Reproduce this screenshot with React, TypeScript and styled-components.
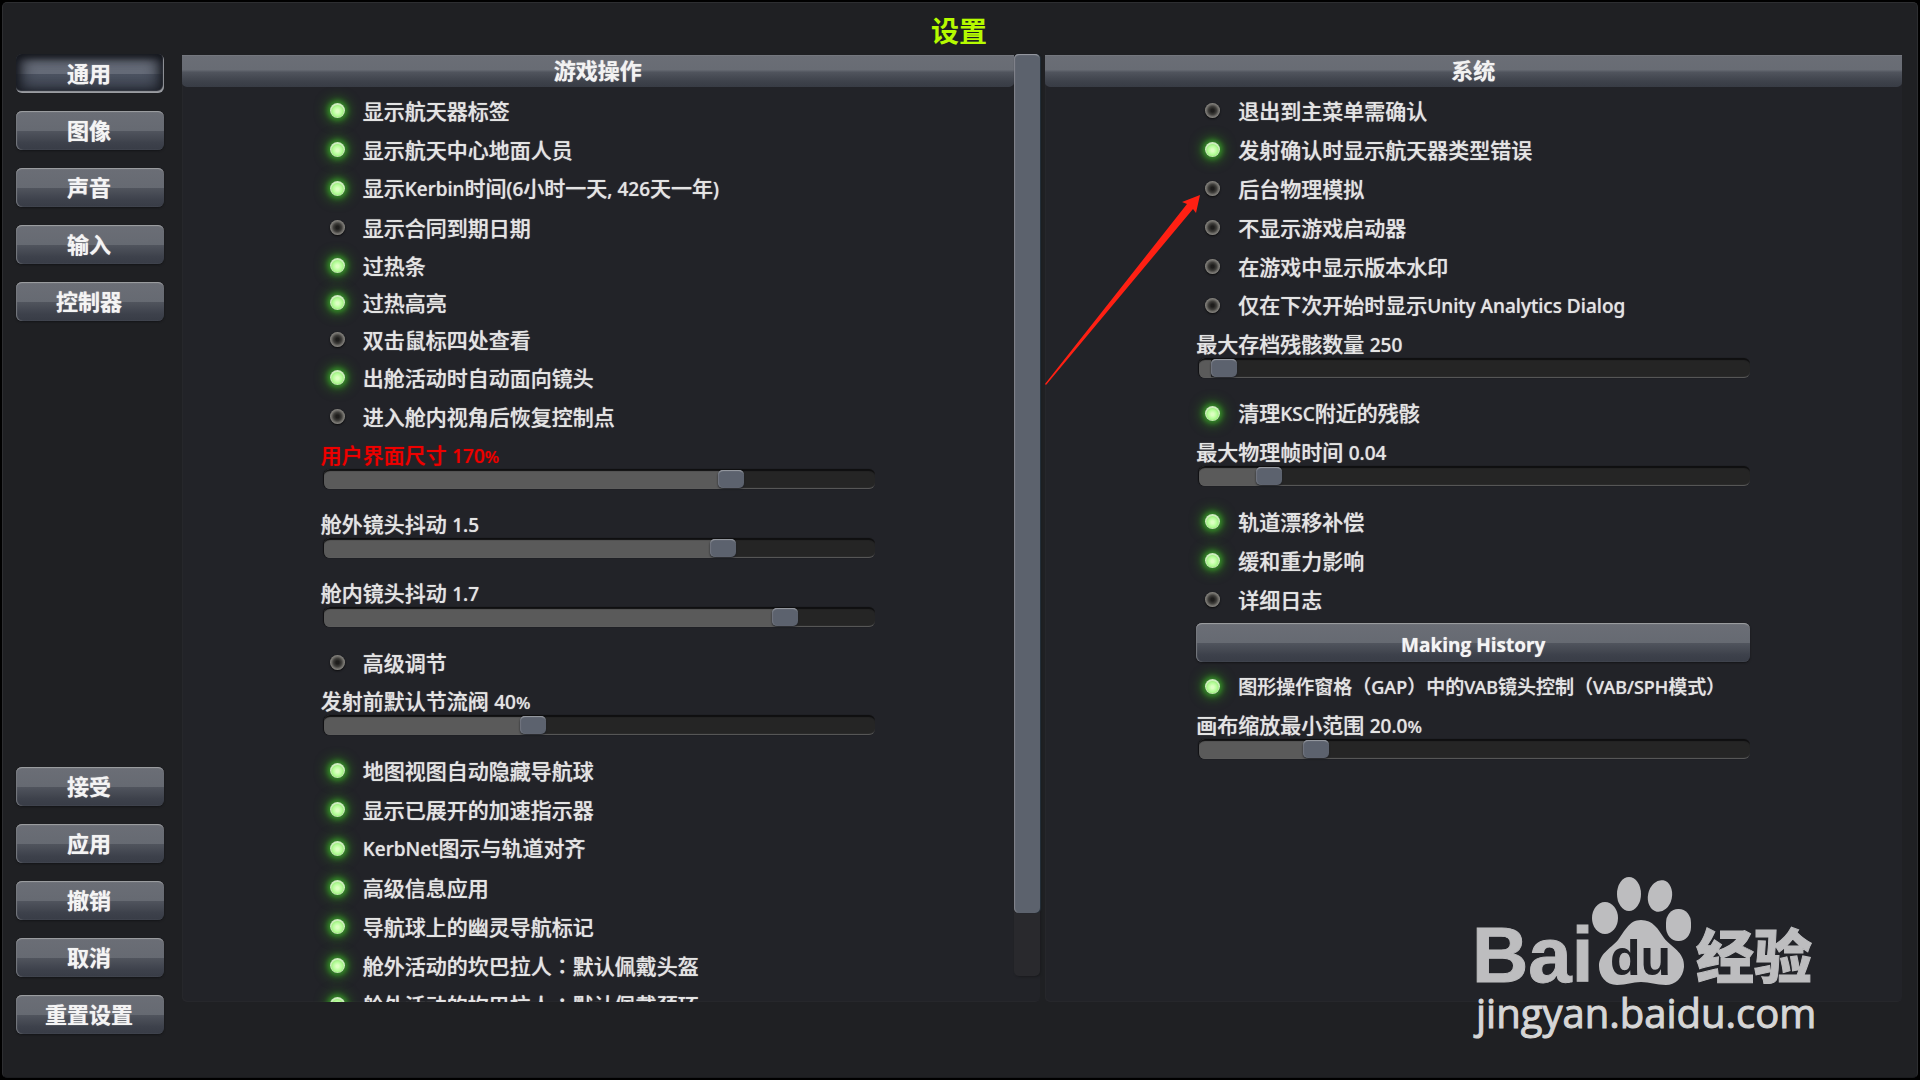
import React, { useState } from "react";
import styled, { createGlobalStyle, css } from "styled-components";

const GlobalStyle = createGlobalStyle`
  *, *::before, *::after { box-sizing: border-box; }
  body {
    margin: 0;
    background: #000;
    color: #e4e4e4;
    font-family: "Noto Sans", "Noto Sans CJK SC", sans-serif;
    font-size: 21px;
    line-height: 26px;
  }
  button, input { font: inherit; color: inherit; }
`;

const Screen = styled.div`
  position: relative;
  height: 100vh;
  padding: 2px;
  display: flex;
  overflow: hidden;
`;

const Frame = styled.div`
  flex: 1;
  min-width: 0;
  display: flex;
  flex-direction: column;
  padding: 0 15px 43px 13px;
  border: 1px solid #2d2e31;
  border-bottom-color: #1a1b1e;
  border-radius: 5px;
  background: #1f2023;
`;

const Title = styled.h1`
  margin: 0;
  height: 51px;
  padding-top: 8px;
  font-size: 28px;
  line-height: 40px;
  font-weight: 700;
  text-align: center;
  color: #b6fb00;
`;

const Body = styled.main`
  flex: 1;
  min-height: 0;
  display: grid;
  grid-template-columns: 148px minmax(0, 1fr);
  gap: 18px;
`;

const Sidebar = styled.nav`
  display: flex;
  flex-direction: column;
  justify-content: space-between;
`;

const ButtonGroup = styled.div`
  display: flex;
  flex-direction: column;
  gap: 18px;
`;

const raised = css`
  background: linear-gradient(#6b6e76, #666a72 50%, #50545d 52%, #3d414b 82%, #383c46);
  box-shadow: inset 0 2px 1px -1px #a0a1a4, inset 1px 0 1px #777a80, 0 1px 2px #141518;
`;

const sunken = css`
  background: linear-gradient(#666b77, #646a77 50%, #4b5260 52%, #404653);
  box-shadow: inset -1px -2px 1px #9a9ca1, inset 0 3px 7px #14161c, inset 6px 0 14px #1d2028,
    inset -6px 0 14px #1d2028;
`;

const PushButton = styled.button<{ $pressed?: boolean }>`
  width: 100%;
  height: 39px;
  padding: 0 2px 2px 0;
  border: 0;
  border-radius: 6px;
  font-size: 22px;
  font-weight: 700;
  color: #f4f4f4;
  text-shadow: 0 0 1px #d0d0d0;
  cursor: pointer;
  ${(p) => (p.$pressed ? sunken : raised)}
`;

const Panels = styled.div`
  min-height: 0;
  margin: 1px 0 32px;
  display: grid;
  grid-template-columns: minmax(0, 1fr) minmax(0, 1fr);
  grid-template-rows: minmax(0, 1fr);
  gap: 5px;
`;

const Panel = styled.section`
  min-height: 0;
  display: flex;
  border-radius: 5px;
  background: #222328;
  box-shadow: inset 1px -1px 0 #26272b;
`;

const PanelMain = styled.div`
  flex: 1;
  min-width: 0;
  min-height: 0;
  display: flex;
  flex-direction: column;
`;

const PanelTitle = styled.h2`
  flex: none;
  margin: 0;
  height: 32px;
  border-radius: 0 0 5px 5px;
  background: linear-gradient(#6b6e76, #686c74 46%, #50545d 54%, #3d414a 84%, #383c45);
  box-shadow: inset 0 1px 0 #74777e;
  font-size: 22px;
  line-height: 31px;
  font-weight: 700;
  text-align: center;
  color: #f2f2f2;
  text-shadow: 0 0 1px #d0d0d0;
`;

const OptionArea = styled.div`
  flex: 1;
  min-height: 0;
  overflow: hidden;
  padding-top: 4px;
`;

const OptionList = styled.div`
  width: 100%;
  max-width: 554px;
  margin: 0 auto;
`;

const ToggleRow = styled.label<{ $compact?: boolean; $small?: boolean }>`
  height: ${(p) => (p.$compact ? 37 : 39)}px;
  padding-left: 9px;
  display: flex;
  align-items: center;
  gap: 18px;
  white-space: nowrap;
  font-size: ${(p) => (p.$small ? 19 : 21)}px;
  font-weight: 500;
  text-shadow: 0 0 1px #b8b8b8;
`;

const Lamp = styled.input`
  appearance: none;
  flex: none;
  width: 15px;
  height: 15px;
  margin: 0;
  border-radius: 50%;
  background: radial-gradient(circle closest-side, #1e1d1c 20%, #3f3e3b 55%, #6d6b67 80%, #8b8983 100%);
  box-shadow: 0 1px 2px #0c0c0d;
  cursor: pointer;

  &:checked {
    background: radial-gradient(circle closest-side at 50% 55%, #dcffc2 20%, #b4fd98 65%, #a6f088 85%, #cdf0bd 100%);
    box-shadow: 0 0 5px 2px #37902a, 0 0 12px 4px #2a6a1e;
  }
`;

const SliderBlock = styled.div`
  height: 69px;
  padding-top: 6px;
`;

const SliderLabel = styled.label<{ $alert?: boolean }>`
  display: block;
  height: 27px;
  white-space: nowrap;
  font-weight: 500;
  color: ${(p) => (p.$alert ? "#ee0000" : "inherit")};
  text-shadow: 0 0 1px ${(p) => (p.$alert ? "#c00000" : "#b8b8b8")};
`;

const Latin = styled.span<{ $small?: boolean }>`
  font-size: ${(p) => (p.$small ? 18 : 19)}px;
`;

const WideColon = styled.span`
  font-family: "Noto Sans CJK TC", sans-serif;
`;

const Percent = styled.span`
  font-size: 17px;
`;

const Range = styled.input`
  appearance: none;
  display: block;
  width: calc(100% - 3px);
  height: 20px;
  margin: 0 0 0 3px;
  border-radius: 6px;
  background: linear-gradient(
    90deg,
    #5a5a5a var(--fill),
    #252525 var(--fill)
  );
  box-shadow: inset 0 3px 1px -1px #0f0f10, inset 0 -2px 1px -1px #5c5c5c, -1px 0 1px #101012;
  cursor: pointer;

  &::-webkit-slider-thumb {
    appearance: none;
    width: 26px;
    height: 18px;
    border-radius: 5px;
    background: #5c626e;
    box-shadow: inset 0 2px 1px -1px #9a9da4, inset 1px 0 1px #70757f, 0 1px 2px #1d1f24;
  }
`;

const Scrollbar = styled.div`
  flex: none;
  width: 26px;
  margin: -1px 0 26px;
  border-radius: 5px;
  background: #29292d;
  box-shadow: 1px 1px 2px #1a1b1e;
`;

const ScrollThumb = styled.div`
  border-radius: 5px;
  background: #5c626d;
  box-shadow: inset 0 2px 1px -1px #9a9da4, inset 2px 0 1px -1px #83868d, 1px 0 1px #24303a;
`;

const WideButton = styled(PushButton)`
  display: block;
  margin: 4px 0 5px;
  padding: 4px 0 0;
  font-family: "Open Sans", "Noto Sans", sans-serif;
  font-size: 19px;
`;

const ArrowMark = styled.svg`
  position: absolute;
  left: 1044px;
  top: 194px;
  width: 158px;
  height: 192px;
  pointer-events: none;
`;

const Watermark = styled.svg`
  position: absolute;
  right: 96px;
  bottom: 32px;
  width: 352px;
  height: 176px;
  pointer-events: none;
  font-family: "Liberation Sans", "Noto Sans CJK SC", sans-serif;
`;

type ToggleItem = { kind: "toggle"; text: string; on: boolean; compact?: boolean; small?: boolean };
type SliderItem = { kind: "slider"; text: string; value: string; percent?: boolean; at: number; alert?: boolean };
type ButtonItem = { kind: "button"; text: string };
type Item = ToggleItem | SliderItem | ButtonItem;

const toggle = (text: string, on: boolean, extra: Partial<ToggleItem> = {}): Item => ({
  kind: "toggle", text, on, ...extra,
});
const slider = (text: string, value: string, at: number, extra: Partial<SliderItem> = {}): Item => ({
  kind: "slider", text, value, at, ...extra,
});

const GAMEPLAY: Item[] = [
  toggle("显示航天器标签", true),
  toggle("显示航天中心地面人员", true),
  toggle("显示Kerbin时间(6小时一天, 426天一年)", true),
  toggle("显示合同到期日期", false),
  toggle("过热条", true, { compact: true }),
  toggle("过热高亮", true, { compact: true }),
  toggle("双击鼠标四处查看", false, { compact: true }),
  toggle("出舱活动时自动面向镜头", true),
  toggle("进入舱内视角后恢复控制点", false),
  slider("用户界面尺寸", "170", 75.1, { percent: true, alert: true }),
  slider("舱外镜头抖动", "1.5", 73.6),
  slider("舱内镜头抖动", "1.7", 85.3),
  toggle("高级调节", false),
  slider("发射前默认节流阀", "40", 37.3, { percent: true }),
  toggle("地图视图自动隐藏导航球", true),
  toggle("显示已展开的加速指示器", true),
  toggle("KerbNet图示与轨道对齐", true),
  toggle("高级信息应用", true),
  toggle("导航球上的幽灵导航标记", true),
  toggle("舱外活动的坎巴拉人：默认佩戴头盔", true),
  toggle("舱外活动的坎巴拉人：默认佩戴颈环", true),
];

const SYSTEM: Item[] = [
  toggle("退出到主菜单需确认", false),
  toggle("发射确认时显示航天器类型错误", true),
  toggle("后台物理模拟", false),
  toggle("不显示游戏启动器", false),
  toggle("在游戏中显示版本水印", false),
  toggle("仅在下次开始时显示Unity Analytics Dialog", false),
  slider("最大存档残骸数量", "250", 2.2),
  toggle("清理KSC附近的残骸", true),
  slider("最大物理帧时间", "0.04", 10.9),
  toggle("轨道漂移补偿", true),
  toggle("缓和重力影响", true),
  toggle("详细日志", false),
  { kind: "button", text: "Making History" },
  toggle("图形操作窗格（GAP）中的VAB镜头控制（VAB/SPH模式）", true, { small: true }),
  slider("画布缩放最小范围", "20.0", 19.8, { percent: true }),
];

const TABS = ["通用", "图像", "声音", "输入", "控制器"];
const ACTIONS = ["接受", "应用", "撤销", "取消", "重置设置"];

/* Latin runs are set a little smaller, and the full-width colon is centred in its cell. */
function Mixed({ text, small }: { text: string; small?: boolean }) {
  return (
    <span>
      {text.split(/([\x20-\x7e]+|：)/).map((run, i) => {
        if (run === "：") return <WideColon key={i} lang="zh-TW">{run}</WideColon>;
        if (/^[\x20-\x7e]/.test(run)) return <Latin key={i} $small={small}>{run}</Latin>;
        return run;
      })}
    </span>
  );
}

function Slider({ item, id }: { item: SliderItem; id: string }) {
  const [at, setAt] = useState(item.at);
  return (
    <SliderBlock>
      <SliderLabel htmlFor={id} $alert={item.alert}>
        {item.text} <Latin>{item.value}</Latin>
        {item.percent && <Percent>%</Percent>}
      </SliderLabel>
      <Range
        id={id}
        type="range"
        min={0}
        max={100}
        step={0.1}
        value={at}
        onChange={(e) => setAt(Number(e.target.value))}
        style={{ "--fill": `${at}%` } as React.CSSProperties}
      />
    </SliderBlock>
  );
}

function Options({ items, name }: { items: Item[]; name: string }) {
  return (
    <OptionArea>
      <OptionList>
        {items.map((item, i) => {
          const id = `${name}-${i}`;
          if (item.kind === "slider") return <Slider key={id} id={id} item={item} />;
          if (item.kind === "button")
            return <WideButton key={id} type="button">{item.text}</WideButton>;
          return (
            <ToggleRow key={id} htmlFor={id} $compact={item.compact} $small={item.small}>
              <Lamp id={id} type="checkbox" defaultChecked={item.on} />
              <Mixed text={item.text} small={item.small} />
            </ToggleRow>
          );
        })}
      </OptionList>
    </OptionArea>
  );
}

export default function App() {
  const [tab, setTab] = useState(0);
  return (
    <Screen lang="zh-CN">
      <GlobalStyle />
      <Frame>
        <Title>设置</Title>
        <Body>
          <Sidebar>
            <ButtonGroup>
              {TABS.map((t, i) => (
                <PushButton key={t} type="button" $pressed={i === tab} onClick={() => setTab(i)}>
                  {t}
                </PushButton>
              ))}
            </ButtonGroup>
            <ButtonGroup>
              {ACTIONS.map((t) => (
                <PushButton key={t} type="button">{t}</PushButton>
              ))}
            </ButtonGroup>
          </Sidebar>
          <Panels>
            <Panel>
              <PanelMain>
                <PanelTitle>游戏操作</PanelTitle>
                <Options items={GAMEPLAY} name="gameplay" />
              </PanelMain>
              <Scrollbar>
                <ScrollThumb style={{ height: "93.2%" }} />
              </Scrollbar>
            </Panel>
            <Panel>
              <PanelMain>
                <PanelTitle>系统</PanelTitle>
                <Options items={SYSTEM} name="system" />
              </PanelMain>
            </Panel>
          </Panels>
        </Body>
      </Frame>
      <ArrowMark viewBox="0 0 158 192" aria-hidden="true">
        <path d="M156 1 L138 8 L143 10 L1 190 L2 191 L149 15 L152 19 Z" fill="#ff2013" />
      </ArrowMark>
      <Watermark viewBox="0 0 352 176">
        <g fill="#bdbdbf">
          <ellipse cx="133" cy="46" rx="13" ry="16" />
          <ellipse cx="157" cy="22" rx="12" ry="17" />
          <ellipse cx="188" cy="24" rx="12" ry="16" transform="rotate(12 188 24)" />
          <rect x="194" y="37" width="25" height="32" rx="12" ry="14" />
          <path d="M169 48 C181 48 186 57 192 66 C199 75 213 80 212 95 C211 106 203 113 194 113 C184 113 178 110 169 110 C160 110 155 113 145 113 C134 113 127 104 127 94 C127 82 138 77 146 68 C153 59 157 48 169 48 Z" />
          <text x="0" y="110" fontSize="78" fontWeight="700" stroke="#bdbdbf" strokeWidth="1">Bai</text>
          <text x="224" y="106" fontSize="58" fontWeight="900" stroke="#bdbdbf" strokeWidth="1">经验</text>
        </g>
        <text x="138" y="103" fontSize="50" fontWeight="700" fill="#222328">du</text>
        <text x="4" y="156" fontSize="40" fontFamily="Open Sans, Noto Sans, sans-serif" fill="#d6d6d6" stroke="#d6d6d6" strokeWidth="1">jingyan.baidu.com</text>
      </Watermark>
    </Screen>
  );
}
